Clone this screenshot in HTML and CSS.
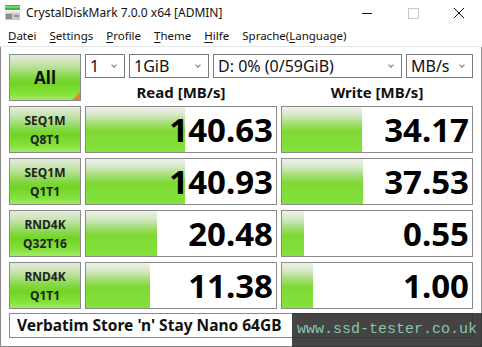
FILE: index.html
```html
<!DOCTYPE html>
<html>
<head>
<meta charset="utf-8">
<link rel="stylesheet" href="styles.css">
</head>
<body>
<div class="window">
  <div class="titlebar">
    <svg class="appicon" width="16" height="16" viewBox="0 0 16 16">
      <rect x="0" y="0" width="15" height="5" fill="#3cb83c"/>
      <rect x="0" y="1" width="15" height="2" fill="#6ad86a"/>
      <rect x="0" y="6" width="15" height="9" fill="#c8c8c8"/>
      <rect x="0" y="6" width="15" height="2" fill="#e8e8e8"/>
      <rect x="1" y="9" width="6" height="5" fill="#8c8c8c"/>
      <rect x="9" y="10" width="5" height="2" fill="#9a9a9a"/>
    </svg>
    <span class="title">CrystalDiskMark 7.0.0 x64 [ADMIN]</span>
    <div class="controls">
      <div class="ctl"><svg width="12" height="12" viewBox="0 0 12 12"><line x1="1" y1="6.5" x2="11" y2="6.5" stroke="#111" stroke-width="1"/></svg></div>
      <div class="ctl"><svg width="12" height="12" viewBox="0 0 12 12"><rect x="1.5" y="1.5" width="10" height="10" fill="none" stroke="#c8c8c8" stroke-width="1"/></svg></div>
      <div class="ctl"><svg width="12" height="12" viewBox="0 0 12 12"><path d="M1 1 L11 11 M11 1 L1 11" stroke="#111" stroke-width="1"/></svg></div>
    </div>
  </div>
  <div class="menubar">
    <span class="mi"><u>D</u>atei</span>
    <span class="mi"><u>S</u>ettings</span>
    <span class="mi"><u>P</u>rofile</span>
    <span class="mi"><u>T</u>heme</span>
    <span class="mi"><u>H</u>ilfe</span>
    <span class="mi">Sprache(<u>L</u>anguage)</span>
  </div>
  <div class="content">
    <div class="top">
      <div class="all">All<span class="corner"></span></div>
      <div class="selects">
        <div class="sel s1"><span>1</span><i class="chev"></i></div>
        <div class="sel s2"><span>1GiB</span><i class="chev"></i></div>
        <div class="sel s3"><span>D: 0% (0/59GiB)</span><i class="chev"></i></div>
        <div class="sel s4"><span>MB/s</span><i class="chev"></i></div>
      </div>
      <div class="hdr">Read [MB/s]</div>
      <div class="hdr">Write [MB/s]</div>
    </div>
    <div class="rows">
      <div class="lbl">SEQ1M<br>Q8T1</div>
      <div class="cell" style="background-size: 99px 100%">140.63</div>
      <div class="cell" style="background-size: 80px 100%">34.17</div>

      <div class="lbl">SEQ1M<br>Q1T1</div>
      <div class="cell" style="background-size: 99px 100%">140.93</div>
      <div class="cell" style="background-size: 81px 100%">37.53</div>

      <div class="lbl">RND4K<br>Q32T16</div>
      <div class="cell" style="background-size: 71px 100%">20.48</div>
      <div class="cell" style="background-size: 22px 100%">0.55</div>

      <div class="lbl">RND4K<br>Q1T1</div>
      <div class="cell" style="background-size: 64px 100%">11.38</div>
      <div class="cell" style="background-size: 31px 100%">1.00</div>
    </div>
    <div class="footer">Verbatim Store 'n' Stay Nano 64GB</div>
  </div>
  <div class="watermark">www.ssd-tester.co.uk</div>
</div>
</body>
</html>
```
FILE: styles.css
```css
* { box-sizing: border-box; }
html, body { margin: 0; padding: 0; background: #fff; }
body { font-family: "Noto Sans", "Open Sans", sans-serif; color: #000; }

.window {
  position: relative;
  width: 482px;
  height: 347px;
  overflow: hidden;
  background: #fff;
}

.titlebar {
  height: 25px;
  display: flex;
  align-items: center;
}
.appicon { margin-left: 5px; margin-top: 1px; }
.title {
  margin-left: 5px;
  font-size: 12px;
  color: #111;
}
.controls { margin-left: auto; display: flex; height: 25px; }
.ctl {
  width: 46px;
  height: 25px;
  display: flex;
  align-items: center;
  justify-content: center;
}

.menubar {
  height: 22px;
  display: flex;
  align-items: center;
  padding-left: 8px;
  gap: 13px;
  font-size: 11.5px;
  color: #111;
  border-bottom: 1px solid #e6e6e6;
}
.menubar u { text-underline-offset: 2px; }

.content {
  height: 300px;
  border: 1px solid #8a8a8a;
  border-top: none;
  padding: 7px 0 0 8px;
}

.top {
  display: grid;
  grid-template-columns: 72px 192px 192px;
  grid-template-rows: 24px 23px;
  column-gap: 4px;
}
.all {
  grid-row: 1 / 3;
  position: relative;
  border: 1px solid #8a8a8a;
  display: flex;
  align-items: center;
  justify-content: center;
  font-weight: 700;
  font-size: 17px;
  color: #111;
  background: linear-gradient(#e4ebdf 0%, #c2e3a6 22%, #86d84a 48%, #72d423 62%, #86e23e 88%, #a6ea6c 100%);
}
.corner {
  position: absolute;
  right: 0;
  bottom: 0;
  width: 0;
  height: 0;
  border-left: 8px solid transparent;
  border-bottom: 8px solid #e8822a;
}
.selects {
  grid-column: 2 / 4;
  display: flex;
  gap: 4px;
}
.sel {
  height: 24px;
  border: 1px solid #7a7a7a;
  display: flex;
  align-items: center;
  padding-left: 4px;
  font-size: 16px;
  color: #111;
}
.s1 { width: 40px; }
.s2 { width: 80px; }
.s3 { width: 189px; }
.s4 { width: 67px; }
.chev {
  margin-left: auto;
  margin-right: 8px;
  width: 4px;
  height: 4px;
  border-right: 1px solid #777;
  border-bottom: 1px solid #777;
  transform: rotate(45deg);
  margin-top: -3px;
}
.hdr {
  font-weight: 700;
  font-size: 15px;
  text-align: center;
  line-height: 18px;
  padding-top: 5px;
  color: #111;
}

.rows {
  margin-top: 5px;
  display: grid;
  grid-template-columns: 72px 192px 192px;
  grid-auto-rows: 47px;
  gap: 5px 4px;
}
.lbl {
  border: 1px solid #8a8a8a;
  display: flex;
  align-items: center;
  justify-content: center;
  text-align: center;
  font-weight: 700;
  font-size: 12px;
  line-height: 19px;
  color: #222;
  background: linear-gradient(#e4ebdf 0%, #c2e3a6 22%, #86d84a 48%, #72d423 62%, #86e23e 88%, #a6ea6c 100%);
}
.cell {
  border: 1px solid #8a8a8a;
  text-align: right;
  font-weight: 700;
  font-size: 33px;
  line-height: 45px;
  padding-right: 3px;
  color: #000;
  background-color: #fff;
  background-image: linear-gradient(#eef1ec 0%, #d4e8c4 18%, #a0dc70 38%, #7ed934 54%, #84e23c 100%);
  background-repeat: no-repeat;
  background-position: left top;
}

.footer {
  margin-top: 4px;
  width: 464px;
  height: 25px;
  border: 1px solid #8a8a8a;
  font-weight: 700;
  font-size: 15.5px;
  line-height: 23px;
  padding-left: 7px;
  color: #111;
}

.watermark {
  position: absolute;
  left: 292px;
  top: 313px;
  width: 190px;
  height: 34px;
  background: rgba(48, 48, 48, 0.9);
  font-family: "Liberation Mono", "DejaVu Sans Mono", monospace;
  font-size: 15px;
  color: #84c8aa;
  padding: 9px 0 0 5px;
  line-height: 16px;
}
```
